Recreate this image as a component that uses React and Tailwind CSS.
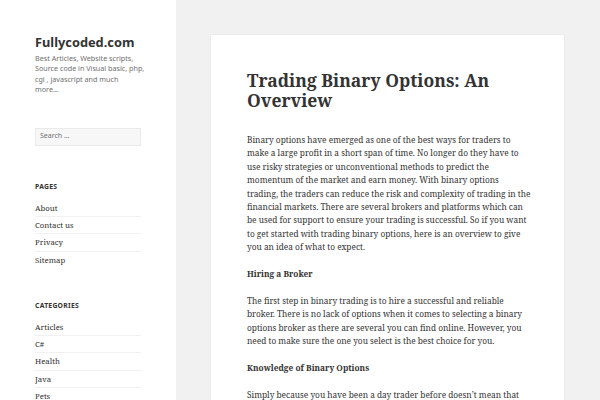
import React from "react";

const serif = "font-['Noto_Serif','DejaVu_Serif',serif]";
const sans = "font-['Noto_Sans','Open_Sans',sans-serif]";

function Lines({ lines }) {
  return lines.map((l, i) => (
    <React.Fragment key={i}>
      {l}
      {i < lines.length - 1 && <br />}
    </React.Fragment>
  ));
}

function Widget({ title, items }) {
  return (
    <div>
      <h2 className={`${sans} text-[6.8px] font-bold uppercase tracking-[0.04em] leading-[10px] text-[#333]`}>
        {title}
      </h2>
      <ul className="mt-[8px]">
        {items.map((it, i) => (
          <li
            key={it}
            className={`${serif} text-[7.8px] leading-[16.3px] text-[#333] ${i > 0 ? "border-t border-[#f1f1f1]" : ""}`}
          >
            {it}
          </li>
        ))}
      </ul>
    </div>
  );
}

export default function App() {
  const p1 = [
    "Binary options have emerged as one of the best ways for traders to",
    "make a large profit in a short span of time. No longer do they have to",
    "use risky strategies or unconventional methods to predict the",
    "momentum of the market and earn money. With binary options",
    "trading, the traders can reduce the risk and complexity of trading in the",
    "financial markets. There are several brokers and platforms which can",
    "be used for support to ensure your trading is successful. So if you want",
    "to get started with trading binary options, here is an overview to give",
    "you an idea of what to expect.",
  ];
  const p2 = [
    "The first step in binary trading is to hire a successful and reliable",
    "broker. There is no lack of options when it comes to selecting a binary",
    "options broker as there are several you can find online. However, you",
    "need to make sure the one you select is the best choice for you.",
  ];
  return (
    <div className="w-[600px] h-[400px] overflow-hidden bg-[#f1f1f1] flex">
      <aside className="w-[176px] shrink-0 bg-white px-[35px] pt-[34px]">
        <div className={`${sans} text-[12.8px] font-bold leading-[16px] text-[#333]`}>Fullycoded.com</div>
        <p className={`${sans} mt-[3px] text-[7.2px] leading-[10.4px] text-[#707070] whitespace-nowrap`}>
          <Lines
            lines={[
              "Best Articles, Website scripts,",
              "Source code in Visual basic, php,",
              "cgi , javascript and much",
              "more…",
            ]}
          />
        </p>
        <div className="mt-[33px] w-[106px] h-[18px] bg-[#f7f7f7] border border-[#eaeaea] flex items-center px-[4px]">
          <span className={`${sans} text-[7px] text-[#707070]`}>Search …</span>
        </div>
        <div className="mt-[36px]">
          <Widget title="Pages" items={["About", "Contact us", "Privacy", "Sitemap"]} />
        </div>
        <div className="mt-[33px]">
          <Widget title="Categories" items={["Articles", "C#", "Health", "Java", "Pets"]} />
        </div>
      </aside>
      <main className="flex-1 pl-[35px] pt-[35px]">
        <article className="w-[353px] h-[400px] bg-white shadow-[0_0_1px_rgba(0,0,0,0.15)] px-[36px] pt-[36px]">
          <h1 className={`${serif} text-[17.5px] font-bold leading-[19.5px] text-[#333]`}>
            Trading Binary Options: An
            <br />
            Overview
          </h1>
          <div className={`${serif} mt-[23px] text-[8.3px] leading-[13.4px] text-[#333] whitespace-nowrap`}>
            <p className="mb-[13.5px]">
              <Lines lines={p1} />
            </p>
            <p className="mb-[13.5px] font-bold">Hiring a Broker</p>
            <p className="mb-[13.5px]">
              <Lines lines={p2} />
            </p>
            <p className="mb-[13.5px] font-bold">Knowledge of Binary Options</p>
            <p>Simply because you have been a day trader before doesn’t mean that</p>
          </div>
        </article>
      </main>
    </div>
  );
}
